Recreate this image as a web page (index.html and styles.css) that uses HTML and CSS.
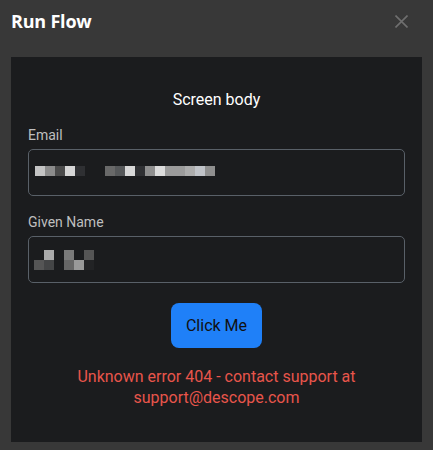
FILE: index.html
```html
<!DOCTYPE html>
<html>
<head>
<meta charset="utf-8">
<link rel="stylesheet" href="styles.css">
</head>
<body>
<div class="dialog">
  <div class="header">
    <div class="heading">Run Flow</div>
    <svg class="close" width="13" height="13" viewBox="0 0 13 13"><path d="M0.5 0.5L12.5 12.5M12.5 0.5L0.5 12.5" stroke="#6f6f6f" stroke-width="1.6" fill="none"/></svg>
  </div>
  <div class="panel">
    <div class="screen-title">Screen body</div>
    <div class="field">
      <div class="label">Email</div>
      <div class="input">
        <div class="pixels">
          <span class="px c1"></span><span class="px c2"></span><span class="px c3"></span><span class="px c4"></span><span class="px c5"></span>
          <span class="space"></span>
          <span class="px c6"></span><span class="px c7"></span><span class="px c8"></span><span class="px c5"></span><span class="px c9"></span><span class="px c10"></span><span class="px c11"></span><span class="px c11"></span><span class="px c12"></span><span class="px c13"></span><span class="px c9"></span>
        </div>
      </div>
    </div>
    <div class="field">
      <div class="label">Given Name</div>
      <div class="input">
        <div class="pixgrid">
          <span></span><span class="g1"></span><span></span><span class="g2"></span><span></span><span class="g3"></span>
          <span class="g3"></span><span class="g4"></span><span></span><span class="g5"></span><span class="g6"></span><span class="g7"></span>
        </div>
      </div>
    </div>
    <div class="actions">
      <button class="btn">Click Me</button>
    </div>
    <div class="error">Unknown error 404 - contact support at<br>support@descope.com</div>
  </div>
</div>
</body>
</html>
```
FILE: styles.css
```css
* { box-sizing: border-box; }
html, body { margin: 0; padding: 0; }
body {
  background: #383838;
  font-family: Roboto, "Liberation Sans", sans-serif;
  width: 433px;
  height: 450px;
  overflow: hidden;
}
.dialog { display: flex; flex-direction: column; }
.header {
  height: 42px;
  display: flex;
  align-items: center;
  justify-content: space-between;
  padding: 0 25px 0 11px;
  margin-bottom: 15px;
}
.heading {
  color: #ffffff;
  font-family: "Open Sans", Roboto, sans-serif;
  font-weight: 700;
  font-size: 18px;
  line-height: 22px;
  letter-spacing: -0.2px;
}
.close { display: block; }
.panel {
  margin: 0 11px;
  height: 385px;
  background: #1b1c1e;
  padding: 33px 17px 0;
  display: flex;
  flex-direction: column;
}
.screen-title {
  color: #ffffff;
  font-size: 16px;
  line-height: 20px;
  text-align: center;
  margin-bottom: 15px;
}
.field { display: flex; flex-direction: column; margin-bottom: 16px; }
.field + .field { margin-bottom: 20px; }
.label {
  color: #bfbfbf;
  font-size: 14px;
  line-height: 20px;
  margin-bottom: 4px;
}
.input {
  height: 47px;
  border: 1px solid #596068;
  border-radius: 5px;
  display: flex;
  align-items: center;
  padding-left: 6px;
}
.pixels { display: flex; height: 10px; margin-top: -3px; }
.px { width: 10px; height: 10px; display: block; }
.space { width: 20px; }
.c1 { background: #c4c4c4; }
.c2 { background: #8c8c8c; }
.c3 { background: #4b4b4b; }
.c4 { background: #d6d6d6; }
.c5 { background: #2f3033; }
.c6 { background: #696969; }
.c7 { background: #56585a; }
.c8 { background: #d8d8d8; }
.c9 { background: #8f8f8f; }
.c10 { background: #dcdcdc; }
.c11 { background: #9b9b9b; }
.c12 { background: #acacac; }
.c13 { background: #c0c3c8; }
.pixgrid {
  display: grid;
  grid-template-columns: repeat(6, 10px);
  grid-template-rows: repeat(2, 10px);
  margin-left: -1px;
  margin-top: 1px;
}
.pixgrid span { display: block; }
.g1 { background: #aaaaaa; }
.g2 { background: #7a7a7a; }
.g3 { background: #555555; }
.g4 { background: #444546; }
.g5 { background: #666666; }
.g6 { background: #999999; }
.g7 { background: #222325; }
.actions { display: flex; justify-content: center; margin-bottom: 18px; }
.btn {
  width: 91px;
  height: 45px;
  background: #1f80f8;
  border: none;
  border-radius: 8px;
  color: #111111;
  font-family: Roboto, "Liberation Sans", sans-serif;
  font-size: 16px;
  padding: 0;
}
.error {
  color: #e8554b;
  font-size: 16px;
  line-height: 21px;
  text-align: center;
}
```
